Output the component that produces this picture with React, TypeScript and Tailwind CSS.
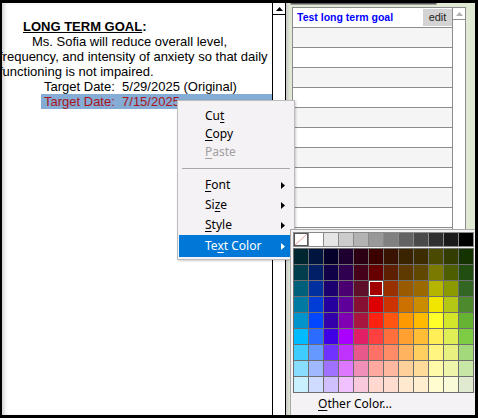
const palette: string[][] = [
    ['bg-[#002630]', 'bg-[#001440]', 'bg-[#05002a]', 'bg-[#1e0030]', 'bg-[#2a0012]', 'bg-[#3a0000]', 'bg-[#3a1200]', 'bg-[#3a2400]', 'bg-[#3d2c00]', 'bg-[#4a4a00]', 'bg-[#333d00]', 'bg-[#153300]'],
    ['bg-[#003d4d]', 'bg-[#001f66]', 'bg-[#0f0048]', 'bg-[#300050]', 'bg-[#45001a]', 'bg-[#660000]', 'bg-[#5e1e00]', 'bg-[#5e3a00]', 'bg-[#614800]', 'bg-[#7a7a00]', 'bg-[#4d5e00]', 'bg-[#224d10]'],
    ['bg-[#005f7a]', 'bg-[#0030a0]', 'bg-[#1c0070]', 'bg-[#4a0070]', 'bg-[#5e0f2a]', 'bg-[#a00000]', 'bg-[#993000]', 'bg-[#9a5a00]', 'bg-[#9a6a00]', 'bg-[#b5b500]', 'bg-[#8a9a00]', 'bg-[#336622]'],
    ['bg-[#007aa3]', 'bg-[#003dd6]', 'bg-[#26009e]', 'bg-[#5e0099]', 'bg-[#851033]', 'bg-[#dd0000]', 'bg-[#cc3300]', 'bg-[#cc7000]', 'bg-[#cc8c00]', 'bg-[#f0e600]', 'bg-[#b3c714]', 'bg-[#4d8a2e]'],
    ['bg-[#0093cc]', 'bg-[#0047ff]', 'bg-[#3300aa]', 'bg-[#8000b3]', 'bg-[#a8153f]', 'bg-[#ff2211]', 'bg-[#ff5511]', 'bg-[#ff9900]', 'bg-[#ffbb00]', 'bg-[#ffff2a]', 'bg-[#d4e62a]', 'bg-[#66b333]'],
    ['bg-[#00bbff]', 'bg-[#2b6bff]', 'bg-[#4000e6]', 'bg-[#aa00ff]', 'bg-[#e01f66]', 'bg-[#ff4040]', 'bg-[#ff6e3d]', 'bg-[#ffa030]', 'bg-[#ffbd35]', 'bg-[#ffee55]', 'bg-[#e0ee55]', 'bg-[#7ecc44]'],
    ['bg-[#3fccff]', 'bg-[#6699ff]', 'bg-[#7033ff]', 'bg-[#c033ff]', 'bg-[#e8588a]', 'bg-[#ff7066]', 'bg-[#ff8c66]', 'bg-[#ffb35e]', 'bg-[#ffcf60]', 'bg-[#fff580]', 'bg-[#e8f080]', 'bg-[#a3d97a]'],
    ['bg-[#88ddff]', 'bg-[#a0b8ff]', 'bg-[#a070ff]', 'bg-[#dd77ff]', 'bg-[#f090b8]', 'bg-[#ffa8a0]', 'bg-[#ffb8a0]', 'bg-[#ffd099]', 'bg-[#ffdb99]', 'bg-[#fffaa8]', 'bg-[#eef5aa]', 'bg-[#c8e6a6]'],
    ['bg-[#c8f0ff]', 'bg-[#d0dcff]', 'bg-[#d0c0ff]', 'bg-[#f0c0ff]', 'bg-[#f8c8dc]', 'bg-[#ffd8d0]', 'bg-[#ffdcd0]', 'bg-[#ffead0]', 'bg-[#ffeed0]', 'bg-[#fffcd0]', 'bg-[#f8fad8]', 'bg-[#e0ead0]'],
]

const grays = ['bg-white', 'bg-[#e5e5e5]', 'bg-[#cccccc]', 'bg-[#b3b3b3]', 'bg-[#999999]', 'bg-[#808080]', 'bg-[#636363]', 'bg-[#4a4a4a]', 'bg-[#303030]', 'bg-[#1a1a1a]', 'bg-black']

const Arrow = ({white = false}: {white?: boolean}) => (
    <svg width="4" height="7" viewBox="0 0 4 7" className="shrink-0">
        <path d="M0 0L4 3.5L0 7Z" fill={white ? '#fff' : '#000'}/>
    </svg>
)

interface ItemProps {
    before?: string
    mnemonic: string
    after?: string
    disabled?: boolean
    active?: boolean
    submenu?: boolean
    className?: string
}

const MenuItem = ({before = '', mnemonic, after = '', disabled = false, active = false, submenu = false, className = ''}: ItemProps) => (
    <div className={`flex items-center pl-[26px] pr-[8px] mx-px ${active ? 'bg-[#0078d7] text-white' : disabled ? 'text-[#a0a0a0]' : 'text-black'} ${className}`}>
        <span className="flex-1 whitespace-pre">
            {before}<span className="underline underline-offset-2">{mnemonic}</span>{after}
        </span>
        {submenu && <Arrow white={active}/>}
    </div>
)

const ContextMenu = () => (
    <div className="absolute left-[177px] top-[100px] w-[118px] pt-[6px] pb-[2px] bg-[#f5f2f5] border border-[#bdbdbd] shadow-[1px_1px_2px_rgba(0,0,0,0.2)] text-[12px] font-['Segoe_UI','Noto_Sans',sans-serif] leading-none">
        <MenuItem className="h-[18px]" before="Cu" mnemonic="t"/>
        <MenuItem className="h-[18px]" mnemonic="C" after="opy"/>
        <MenuItem className="h-[18px]" mnemonic="P" after="aste" disabled/>
        <div className="h-[14px] flex items-center px-[4px]">
            <div className="w-full border-t border-[#a8a8a8]"></div>
        </div>
        <MenuItem className="h-[20px]" mnemonic="F" after="ont" submenu/>
        <MenuItem className="h-[20px]" before="Si" mnemonic="z" after="e" submenu/>
        <MenuItem className="h-[20px]" mnemonic="S" after="tyle" submenu/>
        <MenuItem className="h-[22px]" before="Te" mnemonic="x" after="t Color" active submenu/>
    </div>
)

const ColorPicker = () => (
    <div className="absolute left-[290px] top-[229px] w-[192px] h-[192px] pt-[2px] pl-[2px] bg-[#f5f2f5] border border-[#a8a8a8] font-['Segoe_UI','Noto_Sans',sans-serif]">
        <div className="w-[181px] p-px bg-[#8a8a8a] grid grid-cols-12 gap-px mb-px">
            <div className="h-[13px] bg-white relative overflow-hidden shadow-[inset_0_0_0_1px_#555]">
                <svg width="14" height="13" className="absolute inset-0">
                    <line x1="1" y1="12" x2="13" y2="1" stroke="#e0a0a0" strokeWidth="1"/>
                </svg>
            </div>
            {grays.map((g) => (
                <div key={g} className={`h-[13px] ${g}`}></div>
            ))}
        </div>
        <div className="w-[181px] p-px bg-[#6e6e6e] grid grid-cols-12 gap-px">
            {palette.map((row, r) => row.map((c, i) => (
                <div
                    key={`${r}-${i}`}
                    className={`h-[15px] ${c} ${r === 2 && i === 5 ? 'shadow-[inset_0_0_0_1px_#fff] outline outline-[#5a5a5a]' : ''}`}></div>
            )))}
        </div>
        <div className="h-[22px] flex items-center pl-[25px] text-[12px] text-black">
            <span className="underline underline-offset-2">O</span>ther Color...
        </div>
    </div>
)

const LeftPane = () => (
    <div className="w-[270px] h-full bg-white overflow-hidden pt-[16px] shadow-[inset_4px_0_4px_-2px_rgba(0,0,0,0.2)] font-['Liberation_Sans',Arial,sans-serif] text-[13px] leading-[15px] text-black whitespace-nowrap">
        <div className="ml-[21px] font-bold">
            <span className="underline">LONG TERM GOAL</span>:
        </div>
        <div className="ml-[30px]">Ms. Sofia will reduce overall level,</div>
        <div className="-ml-[3px]">frequency, and intensity of anxiety so that daily</div>
        <div className="-ml-[3px]">functioning is not impaired.</div>
        <div className="ml-[42px] whitespace-pre">Target Date:  5/29/2025 (Original)</div>
        <div className="ml-[39px] pl-[3px] bg-[#84acd5] text-[#a8141c] whitespace-pre">Target Date:  7/15/2025</div>
    </div>
)

const LeftScroll = () => (
    <div className="w-[14px] h-full bg-white border-x border-black flex flex-col">
        <div className="h-[12px] border-b border-black flex items-center justify-center">
            <svg width="7" height="4" viewBox="0 0 7 4">
                <path d="M0 4L3.5 0L7 4Z" fill="#000"/>
            </svg>
        </div>
    </div>
)

const GoalTable = () => {
    const rows = Array.from({length: 21}, (_, i) => i)
    return (
        <div className="flex">
            <div className="w-[161px] border-l border-t border-[#8c8c8c]">
                {rows.map((i) => (
                    <div
                        key={i}
                        className={`h-[20px] border-b border-r border-[#8c8c8c] ${i % 2 === 0 ? 'bg-white' : 'bg-[#f5f5f5]'}`}>
                        {i === 0 && (
                            <div className="h-full flex items-start">
                                <div className="flex-1 pl-[4px] pt-[4px] text-[10.5px] leading-none font-bold text-[#0000ff] font-['Liberation_Sans',Arial,sans-serif]">
                                    Test long term goal
                                </div>
                                <div className="w-[29px] h-[17px] mt-px bg-[#d3d3d3] flex items-center justify-center text-[11px] text-[#222] font-['Liberation_Sans',Arial,sans-serif]">
                                    edit
                                </div>
                            </div>
                        )}
                    </div>
                ))}
            </div>
            <div className="w-[13px] bg-white border-r border-t border-[#8c8c8c]">
                <div className="h-[12px] border-b border-[#8c8c8c] flex items-center justify-center">
                    <svg width="7" height="4" viewBox="0 0 7 4">
                        <path d="M0 4L3.5 0L7 4Z" fill="#b0b0b0"/>
                    </svg>
                </div>
            </div>
        </div>
    )
}

const RightPane = () => (
    <div className="flex-1 h-full bg-[#dfe9d4] relative overflow-hidden">
        <div className="absolute left-0 top-0 w-[4px] h-full bg-gradient-to-r from-[#c8c8c8] to-transparent"></div>
        <div className="ml-[4px] w-[147px] h-[2px] bg-[#5c5c5c] rounded-b-[3px] border-x border-b border-[#9a9a9a]"></div>
        <div className="ml-[6px] mt-[2px]">
            <GoalTable/>
        </div>
    </div>
)

export default function App() {
    return (
        <div className="relative w-[478px] h-[418px] bg-black pt-[3px] pl-[2px] pr-[3px] pb-[3px] overflow-hidden">
            <div className="relative w-full h-full flex overflow-hidden">
                <LeftPane/>
                <LeftScroll/>
                <RightPane/>
            </div>
            <div className="absolute left-[2px] top-[3px] w-[473px] h-[412px] overflow-hidden">
                <div className="relative -left-[2px] -top-[3px]">
                    <ContextMenu/>
                    <ColorPicker/>
                </div>
            </div>
        </div>
    )
}
